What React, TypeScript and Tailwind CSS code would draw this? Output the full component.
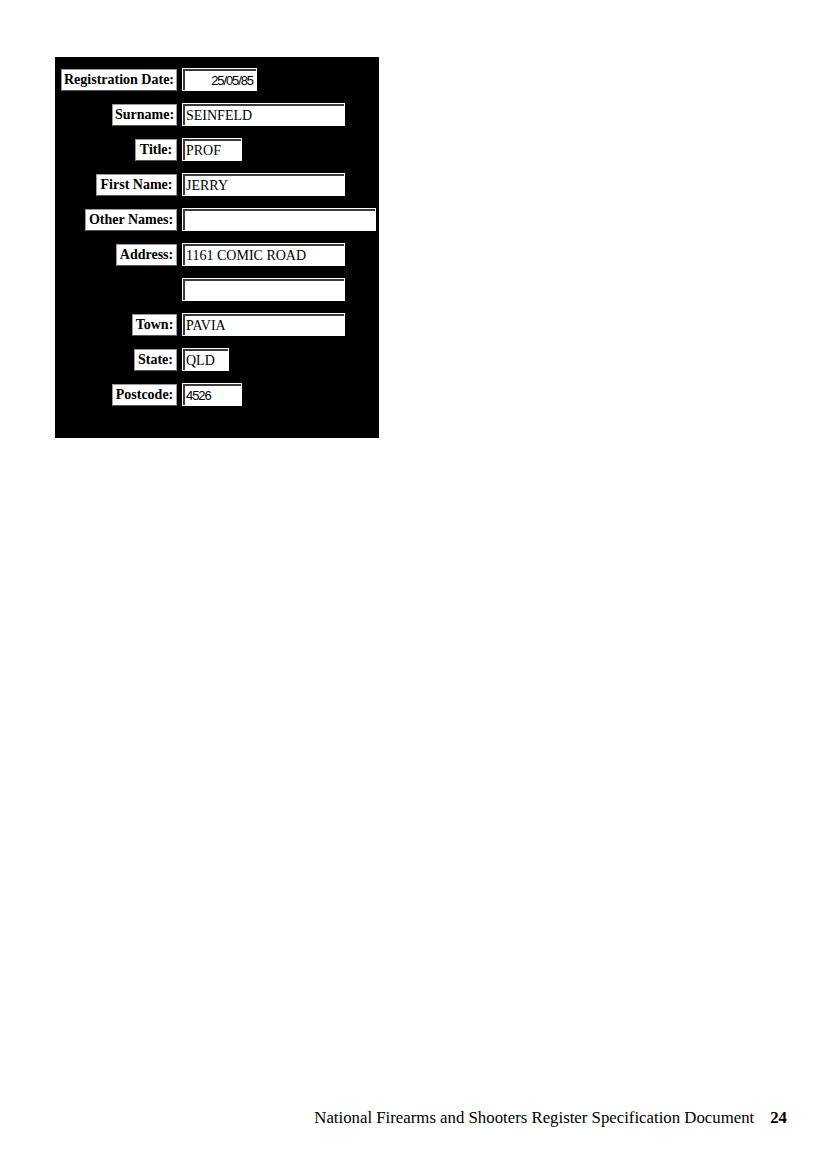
import React from "react";

type Row = { label?: string; lw: number; value: string; iw: number; align?: "right"; sans?: boolean };

const rows: Row[] = [
  { label: "Registration Date:", lw: 116, value: "25/05/85", iw: 75, align: "right", sans: true },
  { label: "Surname:", lw: 65, value: "SEINFELD", iw: 163 },
  { label: "Title:", lw: 42, value: "PROF", iw: 60 },
  { label: "First Name:", lw: 81, value: "JERRY", iw: 163 },
  { label: "Other Names:", lw: 92, value: "", iw: 194 },
  { label: "Address:", lw: 61, value: "1161 COMIC ROAD", iw: 163 },
  { lw: 0, value: "", iw: 163 },
  { label: "Town:", lw: 45, value: "PAVIA", iw: 163 },
  { label: "State:", lw: 43, value: "QLD", iw: 47 },
  { label: "Postcode:", lw: 65, value: "4526", iw: 60, sans: true },
];

function Field({ r }: { r: Row }) {
  return (
    <div className="bg-white p-[1px] h-[23px]" style={{ width: r.iw }}>
      <div
        className={
          "h-full border-t-2 border-l-2 border-[#3a3a3a] flex items-center leading-none text-black " +
          (r.align === "right" ? "justify-end pr-[3px] " : "pl-[1px] ") +
          (r.sans ? "font-['Liberation_Sans',sans-serif] text-[13px] tracking-[-1.1px]" : "font-['Liberation_Serif',serif] text-[14px]")
        }
      >
        {r.value}
      </div>
    </div>
  );
}

export default function App() {
  return (
    <div className="w-[827px] h-[1170px] bg-white flex flex-col font-['Liberation_Serif',serif]">
      <div className="ml-[55px] mt-[57px] w-[324px] h-[381px] bg-black pt-[11px]">
        <div className="grid grid-cols-[122px_1fr] gap-x-[5px] gap-y-[12px]">
          {rows.map((r, i) => (
            <React.Fragment key={i}>
              <div className="flex justify-end items-center h-[23px]">
                {r.label ? (
                  <div
                    className="h-[22px] bg-white border border-[#9a9a9a] border-b-[#555] flex items-center justify-center text-[14px] font-bold text-black leading-none whitespace-nowrap"
                    style={{ width: r.lw }}
                  >
                    {r.label}
                  </div>
                ) : null}
              </div>
              <div className="flex items-center">
                <Field r={r} />
              </div>
            </React.Fragment>
          ))}
        </div>
      </div>
      <div className="mt-auto mb-[43px] flex justify-end items-baseline pr-[40px] text-[16.8px] leading-[18px] text-black">
        <span>National Firearms and Shooters Register Specification Document</span>
        <span className="ml-[16px] font-bold">24</span>
      </div>
    </div>
  );
}
